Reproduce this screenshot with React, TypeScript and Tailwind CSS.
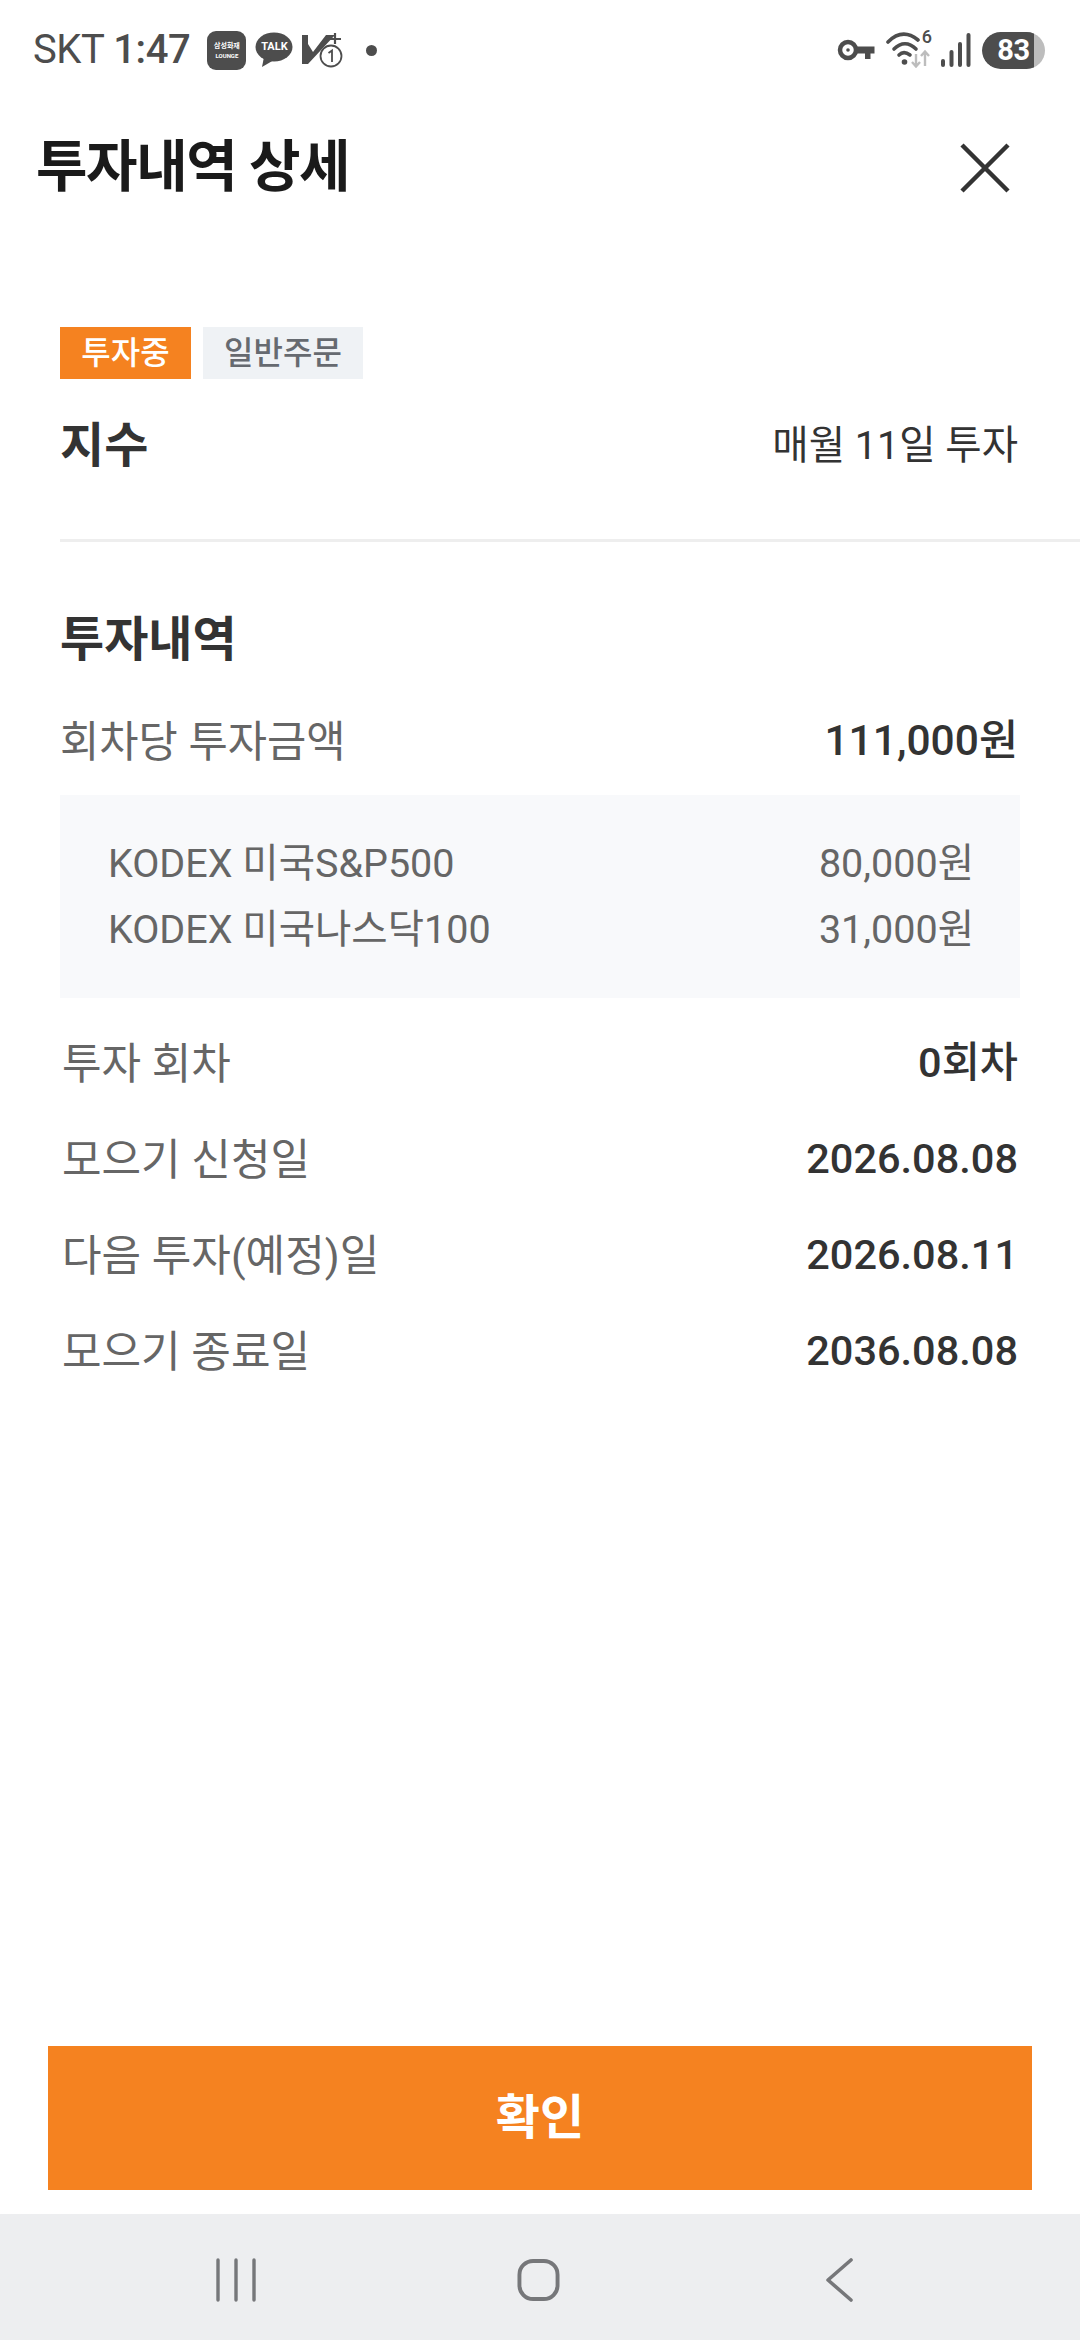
const sans = "font-['Roboto','Noto_Sans_CJK_KR',sans-serif]";

const amounts = [
  { name: 'KODEX 미국S&P500', value: '80,000원' },
  { name: 'KODEX 미국나스닥100', value: '31,000원' },
];

const details = [
  { label: '투자 회차', value: '0회차' },
  { label: '모으기 신청일', value: '2026.08.08' },
  { label: '다음 투자(예정)일', value: '2026.08.11' },
  { label: '모으기 종료일', value: '2036.08.08' },
];

function StatusBar() {
  return (
    <div className="h-[100px] flex items-center justify-between pl-[33px] pr-[35px] text-[#4d4d4d]">
      <div className="flex items-center">
        <span className="text-[40px] leading-none tracking-[-0.4px]">
          SKT <span className="font-medium">1:47</span>
        </span>
        <div className="ml-[17px] w-[39px] h-[39px] rounded-[9px] bg-[#4d4d4d] flex flex-col items-center justify-center text-white">
          <span className="text-[7px] leading-[10px] font-bold">삼성화재</span>
          <span className="text-[6px] leading-[9px] font-bold">LOUNGE</span>
        </div>
        <div className="ml-[9px] relative w-[38px] h-[36px]">
          <svg viewBox="0 0 38 36" className="w-[38px] h-[36px]">
            <ellipse cx="19" cy="15" rx="18.5" ry="14.5" fill="#4d4d4d" />
            <path d="M9 25 L7 35 L19 28 Z" fill="#4d4d4d" />
          </svg>
          <span className="absolute left-0 right-0 top-[8px] text-center text-[11px] leading-[14px] font-bold text-white">TALK</span>
        </div>
        <svg viewBox="0 0 42 36" className="ml-[9px] w-[42px] h-[36px]">
          <path d="M0 3 L6 3 L6 12 L11 20 L24 3 L33 3 L6 32 L0 32 Z" fill="#4d4d4d" />
          <path d="M27 7 H39 M33 1 V12" stroke="#4d4d4d" strokeWidth="2.2" fill="none" />
          <circle cx="29" cy="24" r="10.5" fill="#fff" stroke="#4d4d4d" strokeWidth="1.8" />
          <path d="M26.5 21 L30 18.5 V30" stroke="#4d4d4d" strokeWidth="1.8" fill="none" />
        </svg>
        <div className="ml-[22px] w-[11px] h-[11px] rounded-full bg-[#4d4d4d]" />
      </div>
      <div className="flex items-center">
        <svg viewBox="0 0 38 22" className="w-[38px] h-[22px]">
          <circle cx="11" cy="11" r="8" fill="none" stroke="#4d4d4d" strokeWidth="4.5" />
          <circle cx="11" cy="11" r="1.8" fill="#4d4d4d" />
          <path d="M19 7.5 H37.5 V14.5 H33.5 V20 H28 V14.5 H19 Z" fill="#4d4d4d" />
        </svg>
        <div className="ml-[11px] relative w-[46px] h-[36px]">
          <svg viewBox="0 0 46 36" className="w-[46px] h-[36px]">
            <path d="M2 10 C 12 0, 22 0, 32 8" fill="none" stroke="#4d4d4d" strokeWidth="3.6" strokeLinecap="round" />
            <path d="M8 17 C 15 10, 23 10, 30 17" fill="none" stroke="#4d4d4d" strokeWidth="3.6" strokeLinecap="round" />
            <path d="M13 23 C 16 20, 20 20, 24 23" fill="none" stroke="#4d4d4d" strokeWidth="3.6" strokeLinecap="round" />
            <circle cx="18.5" cy="30" r="2.8" fill="#4d4d4d" />
            <path d="M30 22 V34 M26 30 L30 34.5 L34 30" fill="none" stroke="#bdbdbd" strokeWidth="2.4" />
            <path d="M39 34 V20 M35 24 L39 19.5 L43 24" fill="none" stroke="#bdbdbd" strokeWidth="2.4" />
          </svg>
          <span className="absolute right-0 top-[-5px] text-[18px] leading-[20px] font-medium">6</span>
        </div>
        <svg viewBox="0 0 32 34" className="ml-[8px] w-[32px] h-[34px]">
          <rect x="1" y="26" width="4" height="8" rx="2" fill="#4d4d4d" />
          <rect x="9.5" y="17" width="4" height="17" rx="2" fill="#4d4d4d" />
          <rect x="18" y="9" width="4" height="25" rx="2" fill="#4d4d4d" />
          <rect x="26.5" y="0" width="4" height="34" rx="2" fill="#4d4d4d" />
        </svg>
        <div className="ml-[10px] relative w-[63px] h-[37px] rounded-full bg-[#bdbdbd] overflow-hidden">
          <div className="w-[52px] h-full bg-[#4d4d4d] rounded-l-full" />
          <span className="absolute inset-0 flex items-center justify-center text-[29px] leading-none font-bold text-white tracking-[-0.5px]">83</span>
        </div>
      </div>
    </div>
  );
}

function NavBar() {
  return (
    <div className="h-[126px] bg-[#edeef0] flex items-center pl-[216px] pt-[5px]">
      <svg viewBox="0 0 40 44" className="w-[40px] h-[44px]">
        <path d="M2 2 V42 M20 2 V42 M38 2 V42" stroke="#76777a" strokeWidth="3.4" strokeLinecap="round" />
      </svg>
      <svg viewBox="0 0 44 44" className="ml-[261px] w-[43px] h-[44px]">
        <rect x="2.5" y="2.5" width="39" height="39" rx="14" fill="none" stroke="#76777a" strokeWidth="4" />
      </svg>
      <svg viewBox="0 0 28 44" className="ml-[265px] w-[28px] h-[44px]">
        <path d="M26 2 L3 22 L26 42" fill="none" stroke="#76777a" strokeWidth="3.6" strokeLinecap="round" strokeLinejoin="round" />
      </svg>
    </div>
  );
}

export default function App() {
  return (
    <div className={`${sans} w-[1080px] h-[2340px] bg-white flex flex-col overflow-hidden`}>
      <StatusBar />

      {/* Header */}
      <div className="h-[136px] flex items-center justify-between pl-[36px] pr-[70px]">
        <h1 className="pb-[3px] text-[56px] leading-none font-bold text-[#1a1a1a] tracking-[-1.4px]">투자내역 상세</h1>
        <svg viewBox="0 0 50 50" className="w-[50px] h-[50px]">
          <path d="M2 2 L48 48 M48 2 L2 48" stroke="#333" strokeWidth="4.5" />
        </svg>
      </div>

      <div className="pl-[60px] flex-1 flex flex-col">
        {/* Summary */}
        <div className="mt-[91px] flex gap-[12px]">
          <span className="w-[131px] h-[52px] bg-[#f58220] text-white text-[32px] font-medium flex items-center justify-center">투자중</span>
          <span className="w-[160px] h-[52px] bg-[#eff2f5] text-[#666a70] text-[32px] font-medium flex items-center justify-center">일반주문</span>
        </div>
        <div className="mt-[31px] pr-[62px] flex items-center justify-between h-[72px]">
          <span className="text-[48px] font-bold text-[#333]">지수</span>
          <span className="text-[39.5px] text-[#333]">매월 11일 투자</span>
        </div>
        <div className="mt-[57px] h-[3px] bg-[#eeeeee]" />

        {/* Investment details */}
        <h2 className="mt-[66px] h-[64px] flex items-center text-[48px] font-bold text-[#333]">투자내역</h2>
        <div className="mt-[33px] pr-[62px] h-[72px] flex items-center justify-between">
          <span className="pt-[3px] text-[42.7px] text-[#666]">회차당 투자금액</span>
          <span className="text-[42.5px] font-medium text-[#333]">111,000원</span>
        </div>
        <div className="mt-[18px] mr-[60px] h-[203px] bg-[#f8f9fb] pl-[48px] pr-[46px] flex flex-col justify-center gap-[16px]">
          {amounts.map((item) => (
            <div key={item.name} className="h-[50px] flex items-center justify-between text-[39.5px] text-[#666]">
              <span>{item.name}</span>
              <span>{item.value}</span>
            </div>
          ))}
        </div>
        <div className="mt-[17px] pl-[2px] pr-[62px] flex flex-col">
          {details.map((row) => (
            <div key={row.label} className="h-[96px] flex items-center justify-between">
              <span className="pt-[3px] text-[43px] text-[#666]">{row.label}</span>
              <span className="text-[41.5px] font-medium text-[#333]">{row.value}</span>
            </div>
          ))}
        </div>
      </div>

      {/* Confirm */}
      <div className="px-[48px] pb-[24px]">
        <button className="w-full h-[144px] bg-[#f58220] text-white text-[48px] font-bold flex items-center justify-center">확인</button>
      </div>
      <NavBar />
    </div>
  );
}
